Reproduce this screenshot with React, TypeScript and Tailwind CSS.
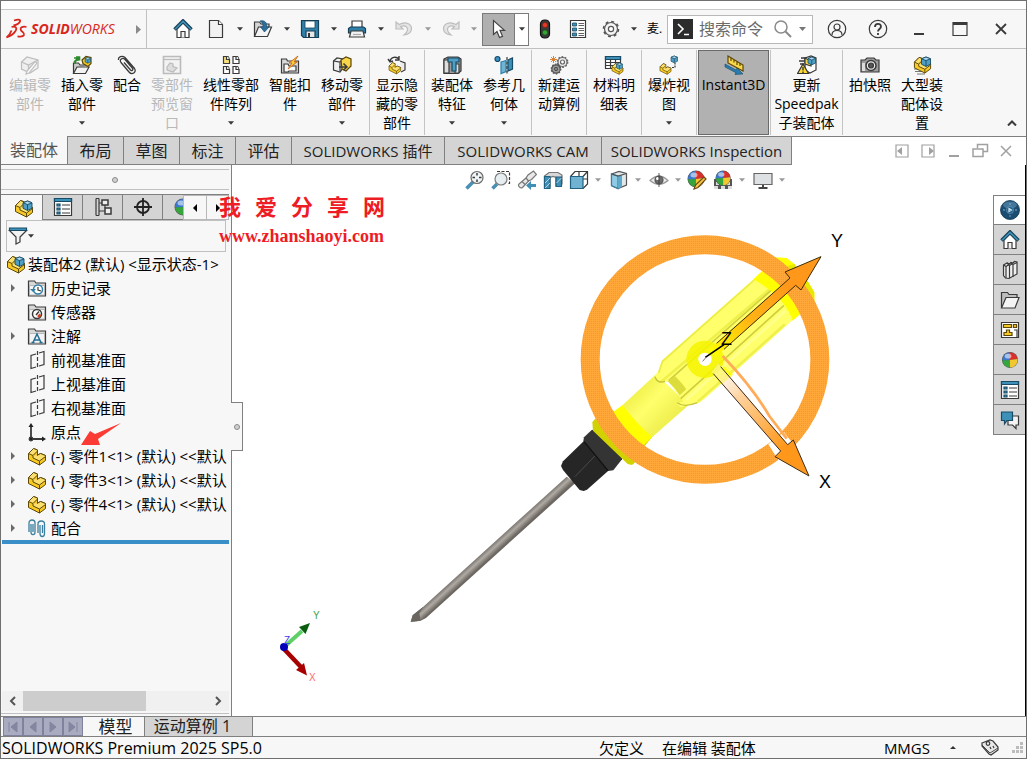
import { useState, type ReactNode } from "react";

type Children = { children?: ReactNode };

const Icon = ({ children }: Children) => (
  <svg viewBox="0 0 20 20" className="h-5 w-5 shrink-0" fill="none" stroke="#3a3a3a" strokeWidth="1.2" aria-hidden="true">
    {children}
  </svg>
);

/* ---------- shared drawing fragments ---------- */

const Part = ({ transform }: { transform?: string }) => (
  <g transform={transform} stroke="#5c4708" strokeWidth="1" strokeLinejoin="round">
    <path d="M1.500 7.500 6.500 2.500l4 1.500v5l3-1.500 5 2v5l-6 4.500-11-5.500z" fill="#f7c923" />
    <path d="M1.500 7.500l4.500 2 4.500-4.500V4l-4-1.500z" fill="#fbe06f" />
    <path d="M6 9.500v2.500l6.500 3 6-4.500v-1l-5-2-3.500 2" fill="#fbe06f" />
    <path d="M12.500 15v4" />
  </g>
);

const Cube = ({ transform }: { transform?: string }) => (
  <g transform={transform} stroke="#174b66" strokeWidth="1" strokeLinejoin="round">
    <path d="M0 2 5 0l5 2v6l-5 2.500L0 8z" fill="#4f9fc4" />
    <path d="M0 2l5 2 5-2-5-2z" fill="#a9d8ec" />
    <path d="M5 4v6.500" />
  </g>
);

const Ball = ({ transform }: { transform?: string }) => (
  <g transform={transform} stroke="none">
    <circle cx="9" cy="9" r="8.500" fill="#555" />
    <path d="M9 9V1a8 8 0 0 1 8 7z" fill="#d9302c" />
    <path d="M9 9V1a8 8 0 0 0-8 8l3 1z" fill="#3d78cf" />
    <path d="M9 9 1 9.500A8 8 0 0 0 9 17z" fill="#35a53c" />
    <path d="M9 9l8-1a8 8 0 0 1-8 9z" fill="#f1c832" />
    <ellipse cx="7" cy="5" rx="3.500" ry="2.500" fill="#fff" opacity=".55" />
  </g>
);

const Assembly = () => (
  <Icon>
    <Part />
    <Cube transform="translate(9 3) scale(.9)" />
  </Icon>
);

const Home = () => (
  <Icon>
    <path d="M4 10v8.500h12V10l-6-6z" fill="#fff" />
    <path d="M8 18.500v-6h4v6" fill="#f2f2f2" />
    <path d="M1.500 10.500 10 2l8.500 8.500" stroke="#173f56" strokeWidth="3.500" />
    <path d="M2 10.200 10 2.400l8 7.800" stroke="#3d91b8" strokeWidth="1.600" />
  </Icon>
);

const ListWindow = () => (
  <Icon>
    <path d="M1.500 1.500h17v17h-17z" fill="#fff" />
    <path d="M1.500 1.500h17v3h-17z" fill="#3d91b8" stroke="#174b66" />
    <path d="M4 7h3v2H4zM4 11h3v2H4zM4 15h3v2H4z" fill="#3d91b8" stroke="#174b66" />
    <path d="M9 8h8M9 12h8M9 16h8" />
  </Icon>
);

const Folder = ({ children }: Children) => (
  <Icon>
    <path d="M1.500 18V3h6l1.500 2h9.500v13z" fill="#d8d8d8" />
    <path d="M2.500 7.500h15V17h-15z" fill="#f4f4f4" stroke="#999" strokeWidth=".6" />
    {children}
  </Icon>
);

const Plane = () => (
  <Icon>
    <path d="M9 4 4 5.500v13L9 17M12 3l5-1.500v13L12 16" />
    <path d="M10.500 1v18" strokeDasharray="4 2" />
  </Icon>
);

const Caret = ({ light }: { light?: boolean }) => (
  <svg viewBox="0 0 7 4" className={light ? "h-1 w-[6px] text-[#9a9a9a]" : "h-1 w-[6px] text-[#3a3a3a]"} aria-hidden="true">
    <path d="M0 0h7L3.500 4z" fill="currentColor" />
  </svg>
);

/* ---------- title bar ---------- */

const Tool = ({ label, width, children }: { label: string; width: string; children: ReactNode }) => (
  <button aria-label={label} className={`flex h-8 shrink-0 items-center justify-center ${width}`}>
    {children}
  </button>
);

const TitleBar = () => (
  <header className="flex h-[39px] items-center border-b border-[#c0c0c0]">
    <div className="flex h-full w-[146px] shrink-0 items-center border-r border-[#c0c0c0] pl-[5px]">
      <svg viewBox="0 0 22 22" className="h-[22px] w-[22px] shrink-0" fill="none" stroke="#d9261c" strokeWidth="1.800" aria-hidden="true">
        <path d="M8 2.500c3-1 7-1.500 6 1-.7 1.500-4 3.500-6.500 4" />
        <path d="M5.500 9c4-1 6 .5 4 4-2 3.200-5 5-9 6.500 2-1.500 4-4 5-7" />
        <path d="M20.500 9c-4-1-7 .8-5.500 3.200C16 14 19 15 18 17c-.8 1.500-3.500 1.800-6.500 1.300" />
      </svg>
      <h1 className="ml-[3px] text-[14px] leading-5 text-[#d9261c] italic">
        <b>SOLID</b>WORKS
      </h1>
      <svg viewBox="0 0 5 9" className="mr-[5px] ml-auto h-[9px] w-[5px]" aria-hidden="true">
        <path d="M0 0v9l5-4.500z" fill="#8a8a8a" />
      </svg>
    </div>
    <div className="flex items-center pl-[17px]">
      <Tool label="主页" width="w-[38px]">
        <Home />
      </Tool>
      <Tool label="新建" width="w-7">
        <Icon>
          <path d="M3.500 1.500h9l4 4v13h-13z" fill="#f1f1f1" />
          <path d="M12.500 1.500v4h4" fill="#fff" />
        </Icon>
      </Tool>
      <Tool label="新建选项" width="w-[19px]"><Caret /></Tool>
      <Tool label="打开" width="w-7">
        <Icon>
          <path d="M1.500 17.500V3h5l1.500 2h8v3" fill="#d5d5d5" />
          <path d="M1.500 17.500 5.500 8h13l-4 9.500z" fill="#f4f4f4" />
          <path d="M7 2c5-1 7 1.500 6.500 6h2.500l-4.500 5L7.500 8H10c.2-3-.5-4.500-3-6z" fill="#2b6f9c" stroke="#1c4d70" strokeWidth=".7" />
        </Icon>
      </Tool>
      <Tool label="打开选项" width="w-[19px]"><Caret /></Tool>
      <Tool label="保存" width="w-7">
        <Icon>
          <path d="M1.500 1.500h17v17h-15l-2-2z" fill="#2f7fa8" stroke="#173f56" />
          <path d="M5 2h10v7H5z" fill="#fff" stroke="#173f56" strokeWidth=".8" />
          <path d="M6 12h9v6.500H6z" fill="#e6e6e6" stroke="#173f56" />
          <path d="M8 14h2v4H8z" fill="#333" stroke="none" />
        </Icon>
      </Tool>
      <Tool label="保存选项" width="w-[19px]"><Caret /></Tool>
      <Tool label="打印" width="w-7">
        <Icon>
          <path d="M5 9V2h10v7" fill="#fff" />
          <path d="M1.500 14V9.500l2-1.500h13l2 1.500V14z" fill="#2f7fa8" stroke="#173f56" />
          <path d="M4 12h12l1.500 6h-15z" fill="#f2f2f2" />
          <path d="M6 15.500h8" stroke="#aaa" />
        </Icon>
      </Tool>
      <Tool label="打印选项" width="w-[19px]"><Caret /></Tool>
      <Tool label="撤消" width="w-7">
        <Icon>
          <path d="M2 3v7h7L6.500 7.500C11 6 14 8 13.500 11c-.3 2-1.500 3.500-3.500 5 5-.5 7.500-3 7.500-6.500 0-4.500-5.500-7.500-12.500-4z" fill="#e4e4e4" stroke="#bdbdbd" />
        </Icon>
      </Tool>
      <Tool label="撤消选项" width="w-[19px]"><Caret light /></Tool>
      <Tool label="重做" width="w-7">
        <Icon>
          <path d="M18 3v7h-7l2.500-2.500C9 6 6 8 6.500 11c.3 2 1.500 3.500 3.500 5-5-.5-7.500-3-7.500-6.500C2.500 5 8 2 15 5.500z" fill="#e4e4e4" stroke="#bdbdbd" />
        </Icon>
      </Tool>
      <Tool label="重做选项" width="w-[17px]"><Caret light /></Tool>
      <div className="flex border border-[#7a7a7a]">
        <button aria-label="选择" className="flex h-[31px] w-8 items-center justify-center border-r border-[#7a7a7a] bg-[#b0b0b0]">
          <Icon>
            <path d="M4.500 1.500v14l3.500-3 2.500 6 3-1.200-2.500-6h4.500z" fill="#fff" stroke="#444" />
          </Icon>
        </button>
        <button aria-label="选择选项" className="flex h-[31px] w-[13px] items-center justify-center bg-white"><Caret /></button>
      </div>
      <Tool label="重建" width="w-8">
        <Icon>
          <rect x="5.500" y="1" width="9" height="18" rx="4" fill="#3a3a3a" stroke="#111" />
          <circle cx="10" cy="6" r="2.600" fill="#e03a22" stroke="#701a10" strokeWidth=".6" />
          <circle cx="10" cy="13.500" r="2.600" fill="#37a334" stroke="#124a10" strokeWidth=".6" />
        </Icon>
      </Tool>
      <Tool label="文件属性" width="w-[34px]">
        <Icon>
          <path d="M2.500 1.500h15v17h-15z" fill="#fff" />
          <path d="M4.500 4h4v3h-4zM4.500 9h4v3h-4zM4.500 14h4v3h-4z" fill="#3d91b8" stroke="#174b66" strokeWidth=".8" />
          <path d="M10.500 4.500H16M10.500 6.500H16M10.500 9.500H16M10.500 11.500H16M10.500 14.500H16M10.500 16.500H16" strokeWidth=".8" />
        </Icon>
      </Tool>
      <Tool label="选项" width="w-8">
        <Icon>
          <circle cx="10" cy="10" r="6.500" fill="#f4f4f4" stroke="#555" />
          <circle cx="10" cy="10" r="7.500" stroke="#555" strokeWidth="1.600" strokeDasharray="2.890 3" />
          <circle cx="10" cy="10" r="2.600" fill="#fff" stroke="#555" />
        </Icon>
      </Tool>
      <Tool label="选项菜单" width="w-[14px]"><Caret /></Tool>
      <span className="ml-[6px] w-5 text-xs leading-5 whitespace-nowrap text-black">麦.</span>
    </div>
    <label className="flex h-[29px] w-[146px] shrink-0 items-center border border-[#b8b8b8] bg-white pl-[5px]">
      <svg viewBox="0 0 20 20" className="h-5 w-5 shrink-0" aria-hidden="true">
        <rect width="20" height="20" fill="#2c2c2c" />
        <path d="M5 5l5 5-5 5M11 15.500h5" fill="none" stroke="#fff" strokeWidth="1.600" />
      </svg>
      <input aria-label="搜索命令" placeholder="搜索命令" className="ml-[6px] w-[74px] min-w-0 bg-transparent text-base leading-6 outline-none placeholder:text-[#6b6b6b]" />
      <svg viewBox="0 0 20 20" className="h-5 w-5 shrink-0" fill="none" stroke="#8a8a8a" strokeWidth="1.500" aria-hidden="true">
        <circle cx="8" cy="8" r="6" />
        <path d="M12.500 12.500 18 18" strokeWidth="2" />
      </svg>
      <svg viewBox="0 0 7 4" className="ml-[6px] h-1 w-[7px] shrink-0" aria-hidden="true">
        <path d="M0 0h7L3.500 4z" fill="#777" />
      </svg>
    </label>
    <Tool label="登录" width="w-12">
      <Icon>
        <circle cx="10" cy="10" r="8.700" />
        <circle cx="10" cy="8" r="3" />
        <path d="M5 16c0-3 2-4.500 5-4.500s5 1.500 5 4.500" />
      </Icon>
    </Tool>
    <Tool label="帮助" width="w-[34px]">
      <Icon>
        <circle cx="10" cy="10" r="8.700" />
        <path d="M7 8c0-4 6-4 6-.5 0 2.500-3 2.500-3 5M10 14v2" strokeWidth="1.800" />
      </Icon>
    </Tool>
    <div className="ml-auto flex pr-[5px]">
      <Tool label="最小化" width="w-[41px]">
        <Icon><path d="M5 15h10" strokeWidth="2" /></Icon>
      </Tool>
      <Tool label="最大化" width="w-[41px]">
        <Icon><path d="M3 3.500h14v13H3z" /><path d="M3 4.500h14" strokeWidth="3" /></Icon>
      </Tool>
      <Tool label="关闭" width="w-[41px]">
        <Icon><path d="M5 5l10 10M15 5 5 15" strokeWidth="1.800" /></Icon>
      </Tool>
    </div>
  </header>
);

/* ---------- ribbon ---------- */

type CommandProps = {
  lines: string[];
  width?: string;
  menu?: boolean;
  off?: boolean;
  active?: boolean;
  children: ReactNode;
};

const Command = ({ lines, width = "w-[52px]", menu, off, active, children }: CommandProps) => (
  <button
    disabled={off}
    className={`flex shrink-0 flex-col items-center pt-1 text-sm leading-[19px] whitespace-nowrap ${width} ${
      off ? "text-[#b8b8b8]" : "text-black"
    } ${active ? "border border-[#6a6a6a] bg-[#b1b1b1]" : "border-y border-transparent"}`}
  >
    {children}
    {lines.map((line) => (
      <span key={line}>{line}</span>
    ))}
    {menu && (
      <span className="flex h-[19px] items-center">
        <Caret />
      </span>
    )}
  </button>
);

const Divider = () => <div className="mx-px w-px shrink-0 bg-[#c4c4c4]" />;

const Ribbon = () => (
  <div className="flex h-[87px] items-stretch py-px pl-[3px]">
    <Command lines={["编辑零", "部件"]} off>
      <Icon>
        <g opacity=".3">
          <path d="M1.500 7 7 2l11 3v8l-8 5-8.500-4z" fill="#ddd" />
          <path d="M1.500 7l7 3 9.500-5M8.500 10v8" />
          <path d="M17 8 9 18l-3 1 1-3 8-9.500z" fill="#fff" />
        </g>
      </Icon>
    </Command>
    <Command lines={["插入零", "部件"]} menu>
      <Icon>
        <path d="M1.500 18.500V8h5l1.500 2h7" fill="#ccc" />
        <path d="M1.500 18.500 5 12h12l-3.500 6.500z" fill="#f3f3f3" />
        <path d="M10 5l4-3.500 5 1v6l-3 3-5-3z" fill="#f7c923" stroke="#5c4708" />
        <Cube transform="translate(13 2.500) scale(.55)" />
        <path d="M3 9C3 6 4 5 6 5V3H2M2 7l5-5M4 2h3.500v3.500" stroke="#2c8a2c" strokeWidth="1.600" />
      </Icon>
    </Command>
    <Command lines={["配合"]} width="w-[38px]">
      <Icon>
        <path
          d="M7 7.500l6.500 7.500c1.500 1.500 3-.2 2-1.700L8 4.500C5.500 2 2 4.500 4 7.500l8 9.500c3 3.500 8 .5 5.500-3.500L8 2.500C5 0 1 2 1.500 5"
          strokeWidth="1.300"
        />
      </Icon>
    </Command>
    <Command lines={["零部件", "预览窗", "口"]} off>
      <Icon>
        <g stroke="#bbb">
          <path d="M1.500 1.500h17v17h-17z" fill="#f2f2f2" strokeWidth="1.600" />
          <path d="M1.500 4.500h17" />
          <path d="M5 12l3-4 3 1v2.500l4 1.500-4 4-6-2z" fill="#ddd" />
        </g>
      </Icon>
    </Command>
    <Command lines={["线性零部", "件阵列"]} width="w-[66px]" menu>
      <Icon>
        <path d="M2.500 8.500v-7h3v3h3v4z" fill="#f8e07a" />
        <path d="M12 8.500v-7h3v3h3v4zM2.500 18.500v-7h3v3h3v4zM12 18.500v-7h3v3h3v4z" fill="#fff" />
        <path d="M5.500 1.500h2l1 3M15 1.500h2l1 3M5.500 11.500h2l1 3M15 11.500h2l1 3" strokeWidth=".9" />
      </Icon>
    </Command>
    <Command lines={["智能扣", "件"]}>
      <Icon>
        <path d="M1.500 18V4h5l1 2h11v12z" fill="#d9d9d9" />
        <path d="M4 9h4l1 2h7v5H9l-1 1H4z" fill="#f7f7f7" />
        <path d="M18 1 9 8h3l-4 6 9-7h-3l4-6z" fill="#f8d13a" stroke="#c8651b" strokeWidth=".9" />
      </Icon>
    </Command>
    <Command lines={["移动零", "部件"]} menu>
      <Icon>
        <path d="M1.500 6 5 3l6 1v9l-3 4-6.500-2z" fill="#efefef" />
        <path d="M1.500 6 8 7l3-3M8 7v9" />
        <path d="M9 5l5-3 5 2v7l-5 5-4-2z" fill="#f7d64a" stroke="#5c4708" />
        <path d="M7 12h7M11.500 8.500 15 12l-3.500 3" strokeWidth="1.500" />
      </Icon>
    </Command>
    <Divider />
    <Command lines={["显示隐", "藏的零", "部件"]}>
      <Icon>
        <path d="M3 6c1-4 6-5 9-2M12 1v4H8M1 4l2 3 3-1" strokeWidth="1.400" />
        <path d="M13 6l5 2v7l-4 2" fill="#ececec" />
        <Part transform="translate(1 6) scale(.68)" />
      </Icon>
    </Command>
    <Divider />
    <Command lines={["装配体", "特征"]} menu>
      <Icon>
        <path d="M2 4l4-2h10l3 2v12l-3 2.500H2z" fill="#9b9b9b" />
        <path d="M2 5h5v13H2zM13 9h4v9h-4z" fill="#dedede" />
        <path d="M6 3h11v4h-3v9h-4V7H6z" fill="#4f9fc4" stroke="#174b66" />
      </Icon>
    </Command>
    <Command lines={["参考几", "何体"]} menu>
      <Icon>
        <circle cx="3.500" cy="4" r="2.500" fill="#3d8fc0" stroke="#174b66" />
        <path d="M7 7l5-1.500v11L7 18.500z" fill="#6fb6d6" stroke="#2f7fa8" />
        <path d="M14 5l4.500-2v11L14 16z" fill="#3d91b8" stroke="#174b66" />
        <path d="M13 2v17" strokeDasharray="3 1.500" />
      </Icon>
    </Command>
    <Divider />
    <Command lines={["新建运", "动算例"]}>
      <Icon>
        <circle cx="13.500" cy="7" r="4.500" fill="#eee" stroke="#666" />
        <circle cx="13.500" cy="7" r="5.300" strokeDasharray="1.800 1.530" stroke="#666" />
        <circle cx="13.500" cy="7" r="2" fill="#fff" stroke="#666" />
        <circle cx="7" cy="14" r="4.200" fill="#9a9a9a" stroke="#555" />
        <circle cx="7" cy="14" r="4.800" strokeDasharray="1.600 1.400" stroke="#555" />
        <circle cx="7" cy="14" r="1.300" fill="#fff" />
        <path d="M4.500 1v7M1 4.500h7M2 2l5 5M7 2 2 7" stroke="#d8751f" strokeWidth=".9" />
      </Icon>
    </Command>
    <Divider />
    <Command lines={["材料明", "细表"]}>
      <Icon>
        <path d="M1.500 1.500h15v12h-15z" fill="#fff" />
        <path d="M1.500 1.500h15v3h-15z" fill="#3d91b8" stroke="#174b66" />
        <path d="M1.500 7.500h15M1.500 10.500h15M6.500 4v9M11.500 4v9" />
        <Part transform="translate(7 7) scale(.65)" />
        <Cube transform="translate(12.500 8) scale(.6)" />
      </Icon>
    </Command>
    <Divider />
    <Command lines={["爆炸视", "图"]} menu>
      <Icon>
        <Part transform="translate(0 7) scale(.65)" />
        <Cube transform="translate(12 1) scale(.65)" />
        <path d="M13 12.500h3V8" strokeDasharray="2 1" />
      </Icon>
    </Command>
    <Divider />
    <Command lines={["Instant3D"]} width="w-[71px]" active>
      <Icon>
        <path d="M4 1l15 9v6L4 8z" fill="#f8d84a" stroke="#5c4708" />
        <path d="M7 3v3M10 5v2.500M13 6.500V10M16 8v3" stroke="#5c4708" />
        <path d="M1 9l11 6 1-2 6 6-8 .5 1-1.800L1 12z" fill="#2b7cae" stroke="#174b66" strokeWidth=".6" />
      </Icon>
    </Command>
    <Divider />
    <Command lines={["更新", "Speedpak", "子装配体"]} width="w-[69px]">
      <Icon>
        <path d="M4 3h5M2 6h6M3 9h4" strokeWidth="1.500" />
        <path d="M8 3l6-2 5 2v12l-6 3-5-3z" fill="#fff" />
        <path d="M8 3l6 3v5l-6-2z" fill="#f7d64a" />
        <Cube transform="translate(11 2) scale(.75)" />
        <path d="M6 9l5.500 9.500H.5z" fill="#fbd92e" stroke="#333" />
        <path d="M6 12v3.500M6 16.500V18" strokeWidth="1.400" />
      </Icon>
    </Command>
    <Divider />
    <Command lines={["拍快照"]}>
      <Icon>
        <path d="M1 5h4l2-2h7l2 2h3v12H1z" fill="#9d9d9d" />
        <path d="M2 8h3v8H2z" fill="#ddd" stroke="none" />
        <circle cx="11" cy="10.500" r="5" fill="#eee" strokeWidth="1.500" />
        <circle cx="11" cy="10.500" r="2.500" fill="#555" />
      </Icon>
    </Command>
    <Command lines={["大型装", "配体设", "置"]}>
      <Icon>
        <path d="M2 14h7M3 16.500h8M5 19h8" strokeWidth="1" stroke="#777" />
        <Part transform="translate(1 0) scale(.95)" />
        <Cube transform="translate(9.500 2) scale(.9)" />
      </Icon>
    </Command>
    <button aria-label="收起功能区" className="mr-1 ml-auto flex h-6 w-5 items-center justify-center self-end">
      <svg viewBox="0 0 10 6" className="h-[6px] w-[10px]" fill="none" stroke="#3a3a3a" strokeWidth="2" aria-hidden="true">
        <path d="M1 5.500l4-4 4 4" />
      </svg>
    </button>
  </div>
);

/* ---------- command manager tabs ---------- */

const TABS = [
  { label: "装配体", width: "w-[67px]" },
  { label: "布局", width: "w-14" },
  { label: "草图", width: "w-14" },
  { label: "标注", width: "w-14" },
  { label: "评估", width: "w-14" },
  { label: "SOLIDWORKS 插件", width: "w-[153px]" },
  { label: "SOLIDWORKS CAM", width: "w-[157px]" },
  { label: "SOLIDWORKS Inspection", width: "w-[190px]" },
];

const CommandTabs = () => {
  const [current, setCurrent] = useState("装配体");
  return (
    <nav className="flex h-[29px]">
      {TABS.map(({ label, width }) => (
        <button
          key={label}
          onClick={() => setCurrent(label)}
          className={`shrink-0 border-r border-b border-[#808080] leading-5 whitespace-nowrap ${width} ${
            label.startsWith("S") ? "text-[15px]" : "text-base"
          } ${label === current ? "text-[#555]" : "border-t bg-[#d4d4d4] text-[#222]"}`}
        >
          {label}
        </button>
      ))}
      <div className="flex flex-1 items-center justify-end gap-[6px] border-t border-[#808080] bg-white pr-[10px]">
        <button aria-label="上一窗口">
          <Icon><path d="M4 4h12v12H4z" stroke="#a0a0a0" /><path d="M10 6v8l-5-4z" fill="#a0a0a0" stroke="none" /></Icon>
        </button>
        <button aria-label="下一窗口">
          <Icon><path d="M4 4h12v12H4z" stroke="#a0a0a0" /><path d="M11 6v8l5-4z" fill="#a0a0a0" stroke="none" /></Icon>
        </button>
        <button aria-label="最小化文档">
          <Icon><path d="M5 15h10" stroke="#a0a0a0" strokeWidth="2" /></Icon>
        </button>
        <button aria-label="还原文档">
          <Icon><path d="M7.500 7V3.500h10v7H13M3 8h10v7.500H3z" stroke="#a0a0a0" strokeWidth="1.500" /></Icon>
        </button>
        <button aria-label="关闭文档">
          <Icon><path d="M5 5l10 10M15 5 5 15" stroke="#a0a0a0" strokeWidth="1.500" /></Icon>
        </button>
      </div>
    </nav>
  );
};

/* ---------- feature tree ---------- */

const PANEL_TAB = "flex w-10 shrink-0 items-center justify-center border-r border-b border-[#808080] bg-[#d4d4d4]";

const PartIcon = () => <Icon><Part /></Icon>;

const TREE: { label: string; icon: ReactNode; open?: boolean }[] = [
  {
    label: "历史记录",
    open: true,
    icon: (
      <Folder>
        <circle cx="11" cy="11.500" r="4.500" fill="#fff" stroke="#2f7fa8" strokeWidth="1.500" />
        <path d="M11 9v3l3 1" />
        <path d="M3 11h6l-3 3z" fill="#2f7fa8" stroke="none" />
      </Folder>
    ),
  },
  {
    label: "传感器",
    icon: (
      <Folder>
        <circle cx="10" cy="12" r="4.500" fill="#fff" strokeWidth="1.500" />
        <path d="M9 13l3-3.500" strokeWidth="1.500" />
        <path d="M11 15l2.500-2.500" stroke="#d8431f" strokeWidth="2.500" />
      </Folder>
    ),
  },
  {
    label: "注解",
    open: true,
    icon: (
      <Folder>
        <path d="M6 16.500 10 8l4 8.500M7.500 14h5M4.500 16.500h3M12.500 16.500h3" stroke="#246d94" strokeWidth="1.500" />
      </Folder>
    ),
  },
  { label: "前视基准面", icon: <Plane /> },
  { label: "上视基准面", icon: <Plane /> },
  { label: "右视基准面", icon: <Plane /> },
  {
    label: "原点",
    icon: (
      <Icon>
        <path d="M4 4v13h12" strokeWidth="1.800" />
        <path d="M4 1l2.500 4h-5zM19 17l-4 2.500v-5z" fill="#222" stroke="none" />
        <circle cx="4" cy="17" r="1.800" fill="#222" />
      </Icon>
    ),
  },
  { label: "(-) 零件1<1> (默认) <<默认", open: true, icon: <PartIcon /> },
  { label: "(-) 零件3<1> (默认) <<默认", open: true, icon: <PartIcon /> },
  { label: "(-) 零件4<1> (默认) <<默认", open: true, icon: <PartIcon /> },
  {
    label: "配合",
    open: true,
    icon: (
      <Icon>
        <g stroke="#3b7f9f" strokeWidth="1.300">
          <path d="M2 14V5c0-4 6-4 6 0v9c0 3.500-4 3.500-4 0V6" />
          <path d="M6 6v8" />
          <path d="M11 15V6c0-4 6.500-4 6.500 0v9.500c0 4-4.500 4-4.500 0V7" />
          <path d="M15.500 7v8" />
        </g>
      </Icon>
    ),
  },
];

const FeaturePanel = () => (
  <aside className="flex w-[231px] shrink-0 flex-col border-r border-[#808080]">
    <div className="mt-1 mr-[2px] flex h-[21px] items-center justify-center border-y border-[#c0c0c0]">
      <span className="h-[6px] w-[6px] rounded-full border border-[#8a8a8a] bg-[#d0d0d0]" />
    </div>
    <div className="mt-1 mr-[2px] flex h-[26px] border-t border-[#808080]">
      <button aria-label="FeatureManager" className="flex w-[42px] shrink-0 items-center justify-center border-r border-[#808080] pl-1"><Assembly /></button>
      <button aria-label="PropertyManager" className={PANEL_TAB}><ListWindow /></button>
      <button aria-label="ConfigurationManager" className={PANEL_TAB}>
        <Icon>
          <path d="M3 1.500v17M6 1.500v17M3 1.500h3M3 18.500h3M6 6h3M6 14h6" />
          <path d="M9 3h6v5H9zM12 11h6v6h-6z" fill="#eee" strokeWidth="1.500" />
          <path d="M12 8v3" />
        </Icon>
      </button>
      <button aria-label="DimXpertManager" className={PANEL_TAB}>
        <Icon>
          <circle cx="10" cy="10" r="6" strokeWidth="1.800" stroke="#222" />
          <path d="M10 1v18M1 10h18" strokeWidth="1.800" stroke="#222" />
        </Icon>
      </button>
      <button aria-label="DisplayManager" className="flex w-5 shrink-0 items-center overflow-hidden border-b border-[#808080] bg-[#d4d4d4] pl-[10px]">
        <Icon><Ball transform="translate(1 1)" /></Icon>
      </button>
      <button aria-label="向左" className="flex w-6 shrink-0 items-center justify-center border border-[#b8b8b8] bg-[#f7f7f7]">
        <svg viewBox="0 0 4 8" className="h-2 w-1" aria-hidden="true"><path d="M4 0v8L0 4z" /></svg>
      </button>
      <button aria-label="向右" className="flex flex-1 items-center justify-center border border-l-0 border-[#b8b8b8] bg-[#f7f7f7]">
        <svg viewBox="0 0 4 8" className="h-2 w-1" aria-hidden="true"><path d="M0 0v8l4-4z" /></svg>
      </button>
    </div>
    <div className="mr-[5px] ml-[5px] flex h-8 items-center border border-[#c0c0c0]">
      <button aria-label="过滤" className="flex items-center pl-px">
        <Icon>
          <path d="M1.500 4.500 8 11v7l4-2v-5l6.500-6.500z" fill="#f2f2f2" />
          <path d="M1.500 2h17v2.500h-17z" fill="#3d91b8" stroke="#174b66" />
        </Icon>
        <Caret />
      </button>
      <input aria-label="过滤树" className="ml-2 min-w-0 flex-1 bg-transparent text-[15px] outline-none" />
    </div>
    <div className="relative mr-[2px] overflow-hidden text-[15px] leading-6 whitespace-nowrap text-black">
      <div className="flex h-6 items-center gap-[2px] pl-[5px]">
        <Assembly />
        <span>装配体2 (默认) &lt;显示状态-1&gt;</span>
      </div>
      <ul>
        {TREE.map(({ label, icon, open }) => (
          <li key={label} className="flex h-6 items-center">
            <button aria-label="展开" className="flex w-[26px] shrink-0 pl-[10px]">
              {open && (
                <svg viewBox="0 0 4 8" className="h-2 w-1" aria-hidden="true">
                  <path d="M0 0v8l4-4z" fill="#6a6a6a" />
                </svg>
              )}
            </button>
            {icon}
            <span className="ml-1">{label}</span>
          </li>
        ))}
      </ul>
      <div className="ml-px h-1 bg-[#3a8fc8]" />
      <svg viewBox="0 0 40 22" className="absolute top-[171px] left-20 h-[22px] w-10" aria-hidden="true">
        <path d="M0 22 9 8l5 3L40 0 17 16l2 6z" fill="#fb3b34" />
      </svg>
    </div>
    <div className="mt-auto mr-[2px] ml-px flex h-5 items-center bg-[#f0f0f0]">
      <button aria-label="向左滚动" className="flex w-[21px] justify-center">
        <svg viewBox="0 0 7 10" className="h-[10px] w-[7px]" fill="none" stroke="#555" strokeWidth="2" aria-hidden="true"><path d="M6 1 2 5l4 4" /></svg>
      </button>
      <div className="flex h-full flex-1">
        <div className="h-full w-2/3 bg-[#cdcdcd]" />
      </div>
      <button aria-label="向右滚动" className="flex w-[21px] justify-center">
        <svg viewBox="0 0 7 10" className="h-[10px] w-[7px]" fill="none" stroke="#555" strokeWidth="2" aria-hidden="true"><path d="M1 1l4 4-4 4" /></svg>
      </button>
    </div>
    <div className="mt-[2px] mr-[2px] h-[3px] border-t border-[#c0c0c0]" />
  </aside>
);

/* ---------- graphics area ---------- */

const Model = () => (
  <svg viewBox="232 165 793 551" className="absolute inset-0 h-full w-full" aria-label="螺丝刀装配体">
    <defs>
      <pattern id="mesh" width="6" height="6" patternUnits="userSpaceOnUse">
        <rect width="6" height="6" fill="#ff971a" />
        <path d="M0 1.500h6M0 4.500h3" stroke="#ffb659" strokeWidth="1.500" />
      </pattern>
      <linearGradient id="shaft" gradientUnits="userSpaceOnUse" x1="282" y1="963" x2="302" y2="985">
        <stop offset="0" stopColor="#6d6762" />
        <stop offset=".5" stopColor="#b0aaa4" />
        <stop offset="1" stopColor="#6d6762" />
      </linearGradient>
      <linearGradient id="neck" gradientUnits="userSpaceOnUse" x1="700" y1="525" x2="800" y2="620">
        <stop offset="0" stopColor="#f2f250" />
        <stop offset=".4" stopColor="#ffff6c" />
        <stop offset="1" stopColor="#eeee4e" />
      </linearGradient>
      <linearGradient id="yArrow" gradientUnits="userSpaceOnUse" x1="940" y1="400" x2="1160" y2="200">
        <stop offset="0" stopColor="#ffff00" />
        <stop offset=".5" stopColor="#ffb414" />
        <stop offset="1" stopColor="#ff981a" />
      </linearGradient>
      <linearGradient id="xArrow" gradientUnits="userSpaceOnUse" x1="945" y1="445" x2="1150" y2="685">
        <stop offset="0" stopColor="#fff8ee" stopOpacity=".4" />
        <stop offset=".35" stopColor="#ffd3a0" />
        <stop offset="1" stopColor="#ff981a" />
      </linearGradient>
    </defs>

    <g transform="translate(400 220) scale(.33333)">
      {/* blade */}
      <path d="M500 770 70 1160l-32 26-6 20 30-4 16-8L527 788z" fill="url(#shaft)" />
      <path d="M70 1160l-32 26-6 20 30-4-4-22z" fill="#6a655f" />
      {/* ferrule */}
      <path d="M551 664l-62 60-6 14 6 12 50 60 12 3 10-4 70-62z" fill="#262626" />
      <path d="M602 690 525 770" stroke="#4a4a4a" strokeWidth="3" />
      <path d="M575 630l15-2 76 72v18l-26 33-16 2-74-90 2-11z" fill="#343434" />
      <path d="M552 664l72 88" stroke="#111" strokeWidth="4" />
      {/* collar */}
      <path d="M640 572l-52 22-11 12 2 26 104 100 13 3 8-7 22-40 31-38z" fill="#d2d200" />
      <path d="M668 555 640 575l-38 20 100 110 55-55z" fill="#ffff00" />
      {/* handle */}
      <path d="M768 463 668 555q40 55 89 96l110-97z" fill="url(#neck)" />
      <path d="M1060 178 785 422l-10 32-12 14 20 20 22-4 45 60-20 8 14 10 18-6 32-6 18-12 266-238 40-60-60-80z" fill="#ffff6c" />
      <path d="M783 486 1118 200M893 545l262-232" stroke="#f0f04c" strokeWidth="8" />
      <path d="M1063 180 788 424l-12 34" fill="none" stroke="#ecec48" strokeWidth="5" />
      <path d="M806 482 1130 196" stroke="#cfcf3e" strokeWidth="5" />
      <path d="M842 536 1152 256" stroke="#cfcf3e" strokeWidth="5" />
      <path d="M858 540 1156 272" stroke="#ffff8c" strokeWidth="9" />
      <path d="M765 470q8 22 30 14M832 548q20 16 60 0" fill="none" stroke="#c4c43c" strokeWidth="4" />
      <path d="M803 484l22-16q22 22 34 40l-20 18q-14-24-36-42z" fill="#dcdc3c" />
      {/* end cap */}
      <path d="M1060 178l70-66 30 2 23 18 42 55 18 30v28l-65 57q-24-74-118-124z" fill="#ffff00" />
      <path d="M1183 132l42 55 18 30v28l-18 18q-22-80-80-120z" fill="#e8e800" />
      <circle cx="915" cy="418" r="56" fill="#f4f400" opacity=".85" />
      <path d="M945 470l20 24 34-30-28-26z" fill="#ffff00" opacity=".8" />

      {/* rotation ring */}
      <circle cx="915" cy="418.500" r="344.500" fill="none" stroke="url(#mesh)" strokeWidth="57" />
      <path d="M1105 673l47-38 45 60-40 60z" fill="#fff" />
      <path d="M1150 636l36 36" stroke="#ff981a" strokeWidth="2" />
      <path d="M968 408q90 94 140 180l52 68" fill="none" stroke="#ffab58" strokeWidth="8" />

      {/* axis arrows */}
      <path d="M925 390 1170 174l-15-18 108-46-60 100-16-14-237 212z" fill="url(#yArrow)" />
      <path d="M950 370 1170 174l-15-18 108-46-60 100-16-14-215 192" fill="none" stroke="#3a2a00" strokeWidth="3" />
      <path d="M955 430l208 244 17-14 47 108-102-58 17-17-207-238z" fill="url(#xArrow)" />
      <path d="M962 440l201 234 17-14 47 108-102-58 17-17-202-232" fill="none" stroke="#3a2a1a" strokeWidth="3" />
      <circle cx="915" cy="418" r="20" fill="#fff" />
      <path d="M916 412l56-38" stroke="#000" strokeWidth="5" />
      <path d="M908 424l10-12" stroke="#777" strokeWidth="3" />
    </g>

    <g fontFamily="Liberation Sans, sans-serif" fontSize="18" fill="#000">
      <text x="831" y="247">Y</text>
      <text x="819" y="488">X</text>
      <text x="721" y="345">Z</text>
    </g>

    {/* orientation triad */}
    <path d="M284 647 302 631" stroke="#5fd068" strokeWidth="4" />
    <path d="M310 623l-11 4 6.500 7z" fill="#0a5c0e" />
    <path d="M284 649 301 667" stroke="#a80000" strokeWidth="4.500" />
    <path d="M307 675.500l-11-5.500 8-7z" fill="#a80000" />
    <circle cx="284" cy="647" r="4" fill="#0000b8" />
    <g fontFamily="Liberation Sans, sans-serif" fontSize="10">
      <text x="313" y="619" fill="#3fa34a">Y</text>
      <text x="309" y="681" fill="#ff6b6b">X</text>
      <text x="284" y="644" fill="#3c3cf0">Z</text>
    </g>
  </svg>
);

const ViewToolbar = () => (
  <div className="relative flex h-[30px] items-center gap-[6px]">
    <button aria-label="整屏显示全图">
      <Icon>
        <path d="M1.500 18.500 8 12" stroke="#4b8fb4" strokeWidth="3.500" />
        <circle cx="12" cy="7.500" r="6" fill="#eef3f6" stroke="#6a6a6a" />
        <path d="M12 3v2.500M12 9.500V12M7.500 7.500H10M14 7.500h2.500" strokeWidth="1.500" />
      </Icon>
    </button>
    <button aria-label="局部放大">
      <Icon>
        <path d="M6 1.500h12.500v12H16" strokeDasharray="3 1.500" />
        <path d="M1.500 18.500 6 14" stroke="#4b8fb4" strokeWidth="3.500" />
        <circle cx="10" cy="9" r="6" fill="#e6eef2" stroke="#7a7a7a" />
      </Icon>
    </button>
    <button aria-label="上一视图">
      <Icon>
        <path d="M2 14l7-6 2-3 5.500-4 3 3.500-5 5-3 1.500-6 6.500c-2 1.500-5-1.500-3.500-3.500z" fill="#e8e8e8" stroke="#777" />
        <path d="M9 8l3 3.500M5 11.500l3 3" stroke="#777" />
        <path d="M19 14h-5v-3l-5 4.500 5 4.500v-3h5z" fill="#3f8fb6" stroke="none" />
      </Icon>
    </button>
    <button aria-label="剖面视图">
      <Icon>
        <path d="M1.500 6 6 2.500h9l4 2.500v9l-3 2.500-3-1V7.500l-3-1-3 1v9l-1 2H1.500z" fill="#d8d8d8" stroke="#777" />
        <path d="M1.500 6.500H7v12H1.500zM13 7h5.500v9.500H13z" fill="#3f8fb6" stroke="#22617f" />
        <path d="M2 13l5-5M2 18l5-5M13.500 13l5-5" stroke="#cfe8f4" strokeWidth=".8" />
      </Icon>
    </button>
    <button aria-label="视图定向" className="flex items-center gap-[6px]">
      <Icon>
        <path d="M1.500 6.500 6 1.500h12.500V14L14 18.500" fill="#fff" />
        <path d="M18.500 1.500 14 6.500M10 2v5M18 9h-4" />
        <path d="M1.500 6.500H14v12H1.500z" fill="#6fb2d2" stroke="#22617f" />
      </Icon>
      <Caret light />
    </button>
    <button aria-label="显示样式" className="ml-[2px] flex items-center gap-[6px]">
      <Icon>
        <path d="M2.500 4 10 1.500l7.500 2V15L9 18.500l-6.500-3z" fill="#e0e8ec" stroke="#555" />
        <path d="M2.500 4 9 6v12.500l-6.500-3z" fill="#8fcbe4" stroke="#3b7f9f" />
        <path d="M9 6l4-1v12l-4 1.500z" fill="#5fa9c9" stroke="none" />
        <path d="M2.500 4 9 6l8.500-2.500" stroke="#555" />
      </Icon>
      <Caret light />
    </button>
    <button aria-label="隐藏/显示项目" className="ml-[2px] flex items-center gap-[6px]">
      <Icon>
        <path d="M1 10.500Q10 2 19 10.500 10 18 1 10.500z" fill="#eee" stroke="#999" />
        <circle cx="10" cy="10" r="4" fill="#6d6d6d" stroke="#555" />
        <circle cx="8.500" cy="8.500" r="1.500" fill="#fff" stroke="none" />
        <path d="M10 3v14" stroke="#333" strokeWidth=".8" />
      </Icon>
      <Caret light />
    </button>
    <button aria-label="编辑外观">
      <Icon>
        <Ball />
        <path d="M17 7l2 2-8 8.500-4 1.500 1.500-4z" fill="#f7c84a" stroke="#6b4a12" />
      </Icon>
    </button>
    <button aria-label="应用布景" className="flex items-center gap-[6px]">
      <Icon>
        <path d="M1 9h18v10H1z" fill="#555" stroke="none" />
        <path d="M1 16h4v3H1zM8 16h4v3H8zM15 16h4v3h-4zM3 12h3v3H3zM14 12h3v3h-3z" fill="#ddd" stroke="none" />
        <Ball transform="translate(2 0) scale(.9)" />
      </Icon>
      <Caret light />
    </button>
    <button aria-label="视图设置" className="ml-[2px] flex items-center gap-[6px]">
      <Icon>
        <path d="M1 3.500h18v11H1z" fill="#dde1e3" stroke="#666" />
        <path d="M10 15v3M5.500 18h9" strokeWidth="2" stroke="#444" />
      </Icon>
      <Caret light />
    </button>
  </div>
);

const PANES: { label: string; icon: ReactNode }[] = [
  {
    label: "3DEXPERIENCE",
    icon: (
      <Icon>
        <circle cx="10" cy="10" r="9.500" fill="#1b4d73" stroke="#0f3552" strokeWidth=".8" />
        <ellipse cx="10" cy="5" rx="7" ry="3.500" fill="#5f93b4" stroke="none" opacity=".6" />
        <circle cx="10" cy="10" r="3.600" fill="#245f8a" stroke="#7fb0cd" strokeWidth=".5" />
        <path d="M9 8.500l2.500 1.500L9 11.500zM4 9.500v1M16 9.500v1M9.500 16h1M9.500 4h1" stroke="#d6e8f2" />
      </Icon>
    ),
  },
  { label: "主页", icon: <Home /> },
  {
    label: "设计库",
    icon: (
      <Icon>
        <path d="M3.500 5 7 3l2.500 1L11 2.500l2 .5 1.500-1.500 2.500.5v12L9 18.500 5.500 18l-2-2.500z" fill="#efefef" />
        <path d="M3.500 5 6 6.500 9 4.500M6 6.500V18M7 3l2.500 2.500v12.500M9.500 5.500 12 4M11 2.500 13 4.500V17M13 4.500l4-2" />
      </Icon>
    ),
  },
  {
    label: "文件探索器",
    icon: (
      <Icon>
        <path d="M1.500 18V2.500h6l1.500 2h8V8" fill="#bdbdbd" />
        <path d="M1.500 18 6 7.500h13L15 18z" fill="#f4f4f4" />
      </Icon>
    ),
  },
  {
    label: "视图调色板",
    icon: (
      <Icon>
        <path d="M1.500 2.500h17v15h-17z" fill="#fff" />
        <path d="M3.500 4.500h8v3h-8zM13.500 4.500h3v3h-3zM4 15.500v-3h2.500v-2.500h3v2.500H12v3z" fill="#f7c923" stroke="#5c4708" />
        <path d="M14 10h3v7" />
      </Icon>
    ),
  },
  { label: "外观、布景和贴图", icon: <Icon><Ball transform="translate(1.500 1.500) scale(.94)" /></Icon> },
  { label: "自定义属性", icon: <ListWindow /> },
  {
    label: "论坛",
    icon: (
      <Icon>
        <path d="M8 6h10.500v9H16v3.500L12.500 15H8z" fill="#f4f4f4" />
        <path d="M1.500 2h11v8.500H7L4.500 14v-3.500h-3z" fill="#3d91b8" stroke="#174b66" />
      </Icon>
    ),
  },
];

const TaskPane = () => (
  <div className="relative ml-auto flex w-8 flex-col border-t border-l border-[#808080]">
    {PANES.map(({ label, icon }, i) => (
      <button
        key={label}
        aria-label={label}
        className={`flex items-center justify-center border-b border-[#808080] ${i === 0 ? "h-[29px] bg-white" : "h-[30px] bg-[#d4d4d4]"}`}
      >
        {icon}
      </button>
    ))}
  </div>
);

const Watermark = () => (
  <div className="absolute top-7 left-[218px] flex flex-col text-[#ee1c25]">
    <div className="flex gap-[14px] text-[22px] leading-[26px] font-bold">
      {["我", "爱", "分", "享", "网"].map((char) => (
        <span key={char}>{char}</span>
      ))}
    </div>
    <a href="#home" className="mt-[5px] font-['Liberation_Serif',serif] text-[18px] leading-6 font-bold">
      www.zhanshaoyi.com
    </a>
  </div>
);

/* ---------- bottom ---------- */

const NAV = [
  { label: "最前", d: "M4 3v10M12 3v10L6 8z" },
  { label: "向前", d: "M11 3v10L5 8z" },
  { label: "向后", d: "M5 3v10l6-5z" },
  { label: "最后", d: "M12 3v10M4 3v10l6-5z" },
];

const BottomTabs = () => (
  <div className="flex h-[21px] border-y border-[#808080]">
    <div className="flex pl-[2px]">
      {NAV.map(({ label, d }) => (
        <button key={label} aria-label={label} className="flex w-5 items-center justify-center border border-[#7f829c] bg-[#a9abc0]">
          <svg viewBox="0 0 16 16" className="h-4 w-4" fill="#83869f" stroke="#83869f" aria-hidden="true">
            <path d={d} />
          </svg>
        </button>
      ))}
    </div>
    <button className="w-[62px] border-r border-[#808080] pl-1 text-[17px] leading-[19px] text-[#222]">模型</button>
    <button className="w-[108px] border-r border-[#808080] bg-[#d4d4d4] pr-3 text-base leading-[19px] whitespace-nowrap text-[#222]">
      运动算例 1
    </button>
  </div>
);

const StatusBar = () => (
  <footer className="flex h-[21px] items-center text-[15px] leading-5 whitespace-nowrap text-black">
    <span className="pl-px text-base leading-5">SOLIDWORKS Premium 2025 SP5.0</span>
    <span className="mr-[18px] ml-auto">欠定义</span>
    <span>在编辑 装配体</span>
    <button className="mr-5 ml-[128px] flex items-center gap-5">
      MMGS
      <svg viewBox="0 0 6 3" className="h-[3px] w-[6px]" aria-hidden="true"><path d="M0 3h6L3 0z" fill="#333" /></svg>
    </button>
    <button aria-label="标签" className="mr-3 ml-1">
      <Icon>
        <path d="M2 5l8-3 3 1 5 6v3l-7 5-2-1-7-8z" fill="#e8e8e8" />
        <path d="M2 7l8 8 8-5" strokeWidth=".9" />
        <circle cx="8" cy="5.500" r="1.800" />
        <path d="M10 9l1 2M13 8l1 2" />
      </Icon>
    </button>
    <svg viewBox="0 0 12 12" className="mr-[2px] h-3 w-3" fill="#bcbcbc" aria-hidden="true">
      <path d="M8 0h3v3H8zM4 4h3v3H4zM8 4h3v3H8zM0 8h3v3H0zM4 8h3v3H4zM8 8h3v3H8z" />
    </svg>
  </footer>
);

export default function App() {
  return (
    <div className="flex min-h-screen flex-col overflow-hidden border border-[#707070] bg-[#f7f7f7] font-['Open_Sans','Noto_Sans_CJK_SC',sans-serif]">
      <div className="h-[9px] border-b border-[#c8c8c8] bg-white" />
      <TitleBar />
      <Ribbon />
      <CommandTabs />
      <main className="relative flex flex-1">
        <FeaturePanel />
        <section className="relative flex flex-1 flex-col border-r border-black bg-white">
          <Model />
          <div className="flex justify-center pr-2">
            <ViewToolbar />
          </div>
          <TaskPane />
          <button aria-label="隐藏面板" className="absolute top-[237px] -left-px flex h-[49px] w-3 items-center justify-center border border-l-0 border-[#808080] bg-[#f7f7f7]">
            <span className="h-[6px] w-[6px] rounded-full border border-[#8a8a8a] bg-[#d0d0d0]" />
          </button>
        </section>
        <Watermark />
      </main>
      <BottomTabs />
      <StatusBar />
    </div>
  );
}
